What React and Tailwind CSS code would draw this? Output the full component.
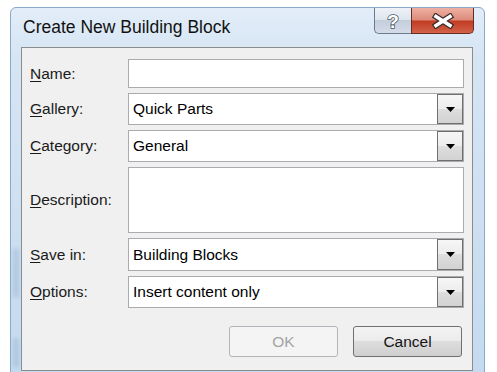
import React from "react";

const F = { fontFamily: '"Liberation Sans", Arial, sans-serif' };

function Label({ k, rest }) {
  return (
    <div className="flex items-center text-[15.5px] text-[#1a1a1a]">
      <span>
        <span className="underline underline-offset-[2px] decoration-1">{k}</span>
        {rest}
      </span>
    </div>
  );
}

function Arrow() {
  return (
    <div className="w-[26px] shrink-0 border border-[#6f6f6f] bg-[linear-gradient(#f6f6f6_0%,#ececec_50%,#dedede_50%,#d2d2d2_100%)] flex items-center justify-center">
      <svg width="9" height="5" viewBox="0 0 9 5">
        <path d="M0 0H9L4.5 5Z" fill="#000" />
      </svg>
    </div>
  );
}

function Select({ value, h }) {
  return (
    <div className={`flex border border-[#a9abaf] bg-white ${h}`}>
      <div className="flex-1 flex items-center pl-[4px] text-[15.5px] text-black">{value}</div>
      <Arrow />
    </div>
  );
}

export default function App() {
  return (
    <div className="w-[497px] h-[372px] bg-white overflow-hidden" style={F}>
      <div className="relative ml-[10px] mt-[7px] w-[475px] h-[400px] border border-[#88a9c9] rounded-t-[6px] bg-[linear-gradient(180deg,#e2edf8_0%,#d6e5f4_12%,#c3d9ee_100%)] flex flex-col">
        <div className="absolute left-[2px] top-[240px] w-[6px] h-[50px] rounded-full bg-[#9fb9d3] opacity-60 blur-[2px]" />
        <div className="absolute left-[2px] top-[330px] w-[6px] h-[30px] rounded-full bg-[#9fb9d3] opacity-60 blur-[2px]" />
        <div className="h-[39px] flex justify-between items-start pl-[12px] pr-[10px]">
          <div className="mt-[9px] text-[17.5px] leading-[20px] text-[#111]">Create New Building Block</div>
          <div className="flex h-[26px]">
            <div className="w-[37px] border border-t-0 border-r-0 border-[#6c7a8c] rounded-bl-[5px] bg-[linear-gradient(#eef2f7_0%,#dde4ed_50%,#c4cfdc_50%,#d3dce7_100%)] flex items-center justify-center">
              <span className="text-[19px] font-bold leading-none text-white [-webkit-text-stroke:1.6px_#4a5566] [paint-order:stroke_fill] mt-[1px]">?</span>
            </div>
            <div className="w-[63px] border border-t-0 border-[#6a2b22] rounded-br-[5px] bg-[linear-gradient(#eeb0a2_0%,#dc8b7a_48%,#c23a22_52%,#d2634a_100%)] flex items-center justify-center">
              <svg width="26" height="16" viewBox="0 0 26 16">
                <path d="M6 3.5L20 12.5M20 3.5L6 12.5" stroke="#3a2a2a" strokeWidth="6" strokeLinecap="square" />
                <path d="M6 3.5L20 12.5M20 3.5L6 12.5" stroke="#fff" strokeWidth="3.6" strokeLinecap="square" />
              </svg>
            </div>
          </div>
        </div>
        <div className="ml-[10px] mr-[11px] h-[324px] border border-[#8a8c8e] bg-[#f0f0f0] pt-[11px] pl-[8px] pr-[8px]">
          <div className="grid grid-cols-[98px_1fr] gap-y-[5px]">
            <Label k="N" rest="ame:" />
            <div className="h-[29px] border border-[#a9abaf] bg-white" />
            <Label k="G" rest="allery:" />
            <Select value="Quick Parts" h="h-[32px]" />
            <Label k="C" rest="ategory:" />
            <Select value="General" h="h-[32px]" />
            <Label k="D" rest="escription:" />
            <div className="h-[66px] border border-[#a9abaf] bg-white" />
            <Label k="S" rest="ave in:" />
            <Select value="Building Blocks" h="h-[33px]" />
            <Label k="O" rest="ptions:" />
            <Select value="Insert content only" h="h-[32px]" />
          </div>
          <div className="mt-[18px] flex justify-end gap-[15px] pr-[2px]">
            <div className="w-[109px] h-[31px] border border-[#b2b6ba] rounded-[3px] bg-[#f4f4f4] flex items-center justify-center text-[15.5px] text-[#a3a3a3]">
              OK
            </div>
            <div className="w-[109px] h-[31px] border border-[#707070] rounded-[3px] bg-[linear-gradient(#f3f3f3_0%,#ebebeb_50%,#dddddd_50%,#cfcfcf_100%)] flex items-center justify-center text-[15.5px] text-[#141414]">
              Cancel
            </div>
          </div>
        </div>
      </div>
    </div>
  );
}
